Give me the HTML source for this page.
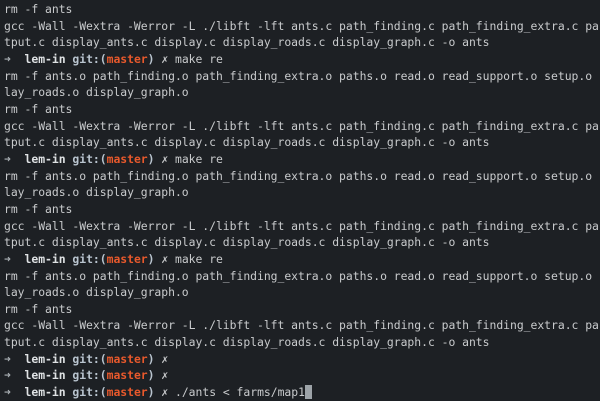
<!DOCTYPE html>
<html><head><style>
html,body{margin:0;padding:0;width:600px;height:401px;overflow:hidden;background:#1d2024;}
pre{margin:0;padding:1px 0 0 4px;font-family:"DejaVu Sans Mono","Liberation Mono",monospace;font-size:11.4px;line-height:16.65px;color:#c9cbcd;white-space:pre;letter-spacing:-0.02px;}
.a{color:#aab0b5;font-weight:bold}
.l{color:#dfe2e4;font-weight:bold}
.g{color:#b9c4cf;font-weight:bold}
.m{color:#e8592c;font-weight:bold}
.x{color:#c9cbcd}
.c{display:inline-block;width:7px;height:14px;background:#9da3a8;vertical-align:-3px}
</style></head><body><pre>rm -f ants
gcc -Wall -Wextra -Werror -L ./libft -lft ants.c path_finding.c path_finding_extra.c pa
tput.c display_ants.c display.c display_roads.c display_graph.c -o ants
<span class="a">➜</span>  <span class="l">lem-in</span> <span class="g">git:(</span><span class="m">master</span><span class="g">)</span> <span class="x">✗</span> make re
rm -f ants.o path_finding.o path_finding_extra.o paths.o read.o read_support.o setup.o
lay_roads.o display_graph.o
rm -f ants
gcc -Wall -Wextra -Werror -L ./libft -lft ants.c path_finding.c path_finding_extra.c pa
tput.c display_ants.c display.c display_roads.c display_graph.c -o ants
<span class="a">➜</span>  <span class="l">lem-in</span> <span class="g">git:(</span><span class="m">master</span><span class="g">)</span> <span class="x">✗</span> make re
rm -f ants.o path_finding.o path_finding_extra.o paths.o read.o read_support.o setup.o
lay_roads.o display_graph.o
rm -f ants
gcc -Wall -Wextra -Werror -L ./libft -lft ants.c path_finding.c path_finding_extra.c pa
tput.c display_ants.c display.c display_roads.c display_graph.c -o ants
<span class="a">➜</span>  <span class="l">lem-in</span> <span class="g">git:(</span><span class="m">master</span><span class="g">)</span> <span class="x">✗</span> make re
rm -f ants.o path_finding.o path_finding_extra.o paths.o read.o read_support.o setup.o
lay_roads.o display_graph.o
rm -f ants
gcc -Wall -Wextra -Werror -L ./libft -lft ants.c path_finding.c path_finding_extra.c pa
tput.c display_ants.c display.c display_roads.c display_graph.c -o ants
<span class="a">➜</span>  <span class="l">lem-in</span> <span class="g">git:(</span><span class="m">master</span><span class="g">)</span> <span class="x">✗</span>
<span class="a">➜</span>  <span class="l">lem-in</span> <span class="g">git:(</span><span class="m">master</span><span class="g">)</span> <span class="x">✗</span>
<span class="a">➜</span>  <span class="l">lem-in</span> <span class="g">git:(</span><span class="m">master</span><span class="g">)</span> <span class="x">✗</span> ./ants &lt; farms/map1<span class="c"></span></pre></body></html>
